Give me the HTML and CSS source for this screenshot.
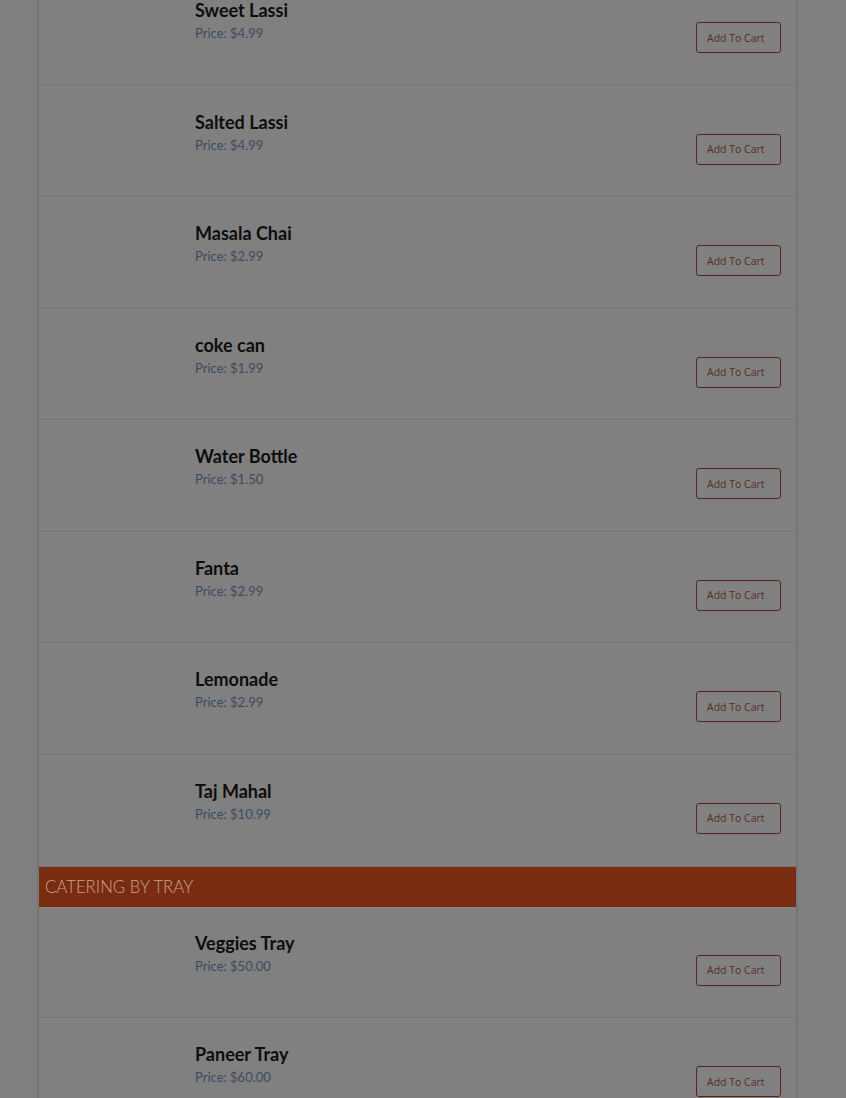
FILE: index.html
```html
<!DOCTYPE html>
<html lang="en">
<head>
<meta charset="utf-8">
<title>Menu</title>
<link rel="stylesheet" href="styles.css">
</head>
<body>
<div class="menu">
  <div class="item"><div class="thumb"></div><div class="info"><div class="name">Sweet Lassi</div><div class="price">Price: $4.99</div></div><div class="action"><button class="cart">Add To Cart</button></div></div>
  <div class="item"><div class="thumb"></div><div class="info"><div class="name">Salted Lassi</div><div class="price">Price: $4.99</div></div><div class="action"><button class="cart">Add To Cart</button></div></div>
  <div class="item"><div class="thumb"></div><div class="info"><div class="name">Masala Chai</div><div class="price">Price: $2.99</div></div><div class="action"><button class="cart">Add To Cart</button></div></div>
  <div class="item"><div class="thumb"></div><div class="info"><div class="name">coke can</div><div class="price">Price: $1.99</div></div><div class="action"><button class="cart">Add To Cart</button></div></div>
  <div class="item"><div class="thumb"></div><div class="info"><div class="name">Water Bottle</div><div class="price">Price: $1.50</div></div><div class="action"><button class="cart">Add To Cart</button></div></div>
  <div class="item"><div class="thumb"></div><div class="info"><div class="name">Fanta</div><div class="price">Price: $2.99</div></div><div class="action"><button class="cart">Add To Cart</button></div></div>
  <div class="item"><div class="thumb"></div><div class="info"><div class="name">Lemonade</div><div class="price">Price: $2.99</div></div><div class="action"><button class="cart">Add To Cart</button></div></div>
  <div class="item"><div class="thumb"></div><div class="info"><div class="name">Taj Mahal</div><div class="price">Price: $10.99</div></div><div class="action"><button class="cart">Add To Cart</button></div></div>
  <div class="category">CATERING BY TRAY</div>
  <div class="item"><div class="thumb"></div><div class="info"><div class="name">Veggies Tray</div><div class="price">Price: $50.00</div></div><div class="action"><button class="cart">Add To Cart</button></div></div>
  <div class="item"><div class="thumb"></div><div class="info"><div class="name">Paneer Tray</div><div class="price">Price: $60.00</div></div><div class="action"><button class="cart">Add To Cart</button></div></div>
</div>
</body>
</html>
```

FILE: styles.css
```css
html, body {
  margin: 0;
  padding: 0;
  background: #7f7f7f;
  overflow: hidden;
}

.menu {
  margin: -26px 0 0 37px;
  width: 757px;
  border-left: 2px solid #767676;
  border-right: 2px solid #767676;
  background: #808080;
}

.item {
  display: flex;
  box-sizing: border-box;
  height: 111.57px;
  border-bottom: 1px solid #747474;
  box-shadow: inset 0 1px 0 #858585;
}

.thumb {
  width: 156px;
  flex: none;
}

.info {
  flex: 1;
  padding-top: 25px;
}

.name {
  font-family: "Lato", "Liberation Sans", sans-serif;
  font-weight: 700;
  font-size: 18px;
  line-height: 22px;
  color: #0d0d0d;
}

.price {
  font-family: "Lato", "Liberation Sans", sans-serif;
  font-size: 13px;
  line-height: 18px;
  margin-top: 3px;
  color: #3b4b5f;
}

.action {
  padding: 48px 15px 0 0;
}

.cart {
  box-sizing: border-box;
  width: 85px;
  height: 31px;
  padding: 0 0 0 10px;
  text-align: left;
  background: #818181;
  border: 1px solid #552519;
  border-radius: 3px;
  font-family: "Open Sans", "Liberation Sans", sans-serif;
  font-size: 10.5px;
  color: #5a2a20;
}

.category {
  height: 40px;
  line-height: 40px;
  background: #7a2c10;
  padding-left: 6px;
  font-family: "Lato", "Liberation Sans", sans-serif;
  font-weight: 300;
  font-size: 16.8px;
  color: #c7a392;
}
```
